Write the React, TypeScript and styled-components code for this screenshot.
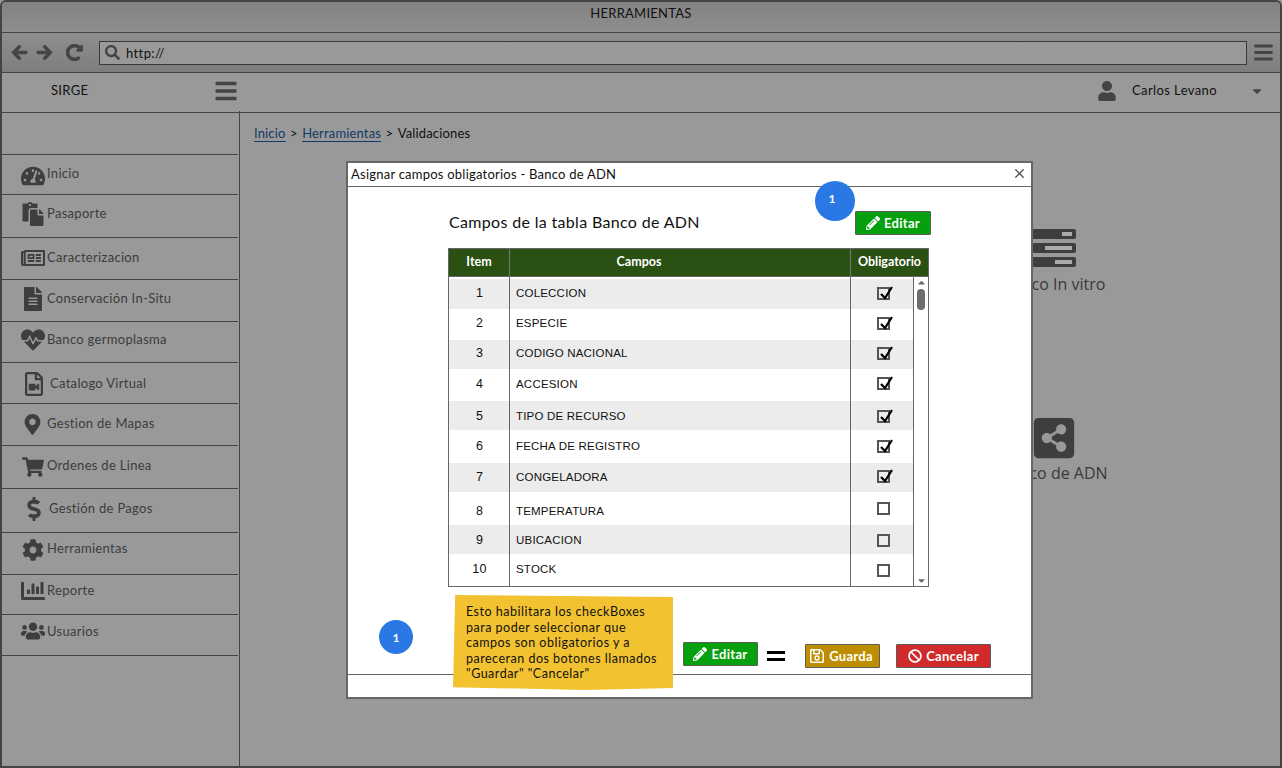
import React from 'react';
import styled, { createGlobalStyle } from 'styled-components';
import {
  FaArrowLeft, FaArrowRight, FaRedoAlt, FaSearch, FaBars, FaUser, FaCaretDown, FaCaretUp,
  FaTachometerAlt, FaPaste, FaRegNewspaper, FaFileAlt, FaHeartbeat, FaRegFileVideo,
  FaMapMarkerAlt, FaShoppingCart, FaDollarSign, FaCog, FaChartBar, FaUsers,
  FaPencilAlt, FaRegSave, FaBan, FaShareAltSquare,
} from 'react-icons/fa';
import { X } from 'lucide-react';

const GlobalStyle = createGlobalStyle`
  html, body { margin: 0; padding: 0; background: #999; }
  * { box-sizing: border-box; }
  body { font-family: Lato, "Open Sans", sans-serif; }
`;

const Frame = styled.div`
  position: relative;
  width: 1282px;
  height: 768px;
  border: 2px solid #444;
  border-radius: 6px 6px 0 0;
  background: #999;
  display: flex;
  flex-direction: column;
  overflow: hidden;
`;

const TitleBar = styled.div`
  height: 31px;
  flex: none;
  border-bottom: 1px solid #444;
  background: linear-gradient(#828282, #8e8e8e);
  color: #111;
  font-size: 13px;
  letter-spacing: 0.25px;
  display: flex;
  justify-content: center;
  padding-top: 3px;
`;

const Toolbar = styled.div`
  height: 40px;
  flex: none;
  border-bottom: 1px solid #444;
  background: linear-gradient(#8e8e8e, #7e7e7e);
  display: flex;
  align-items: center;
  padding: 0 6px 0 9px;
  color: #444;
`;

const NavArrow = styled.span<{ $gap: number }>`
  display: flex;
  font-size: 17px;
  margin-right: ${p => p.$gap}px;
  svg { stroke: currentColor; stroke-width: 30; }
`;

const UrlBox = styled.div`
  flex: 1;
  height: 24px;
  border: 1px solid #3a3a3a;
  background: #999;
  display: flex;
  align-items: center;
  padding-left: 5px;
  gap: 6px;
  color: #111;
  font-size: 13px;
  letter-spacing: 0.4px;
  margin-right: 6px;
  svg { color: #444; font-size: 15px; }
`;

const Burger = styled.span<{ $size: number }>`
  display: flex;
  color: #444;
  font-size: ${p => p.$size}px;
`;

const NavBar = styled.div`
  height: 40px;
  flex: none;
  border-bottom: 1px solid #444;
  display: flex;
  align-items: center;
  padding: 0 16px 4px 49px;
  color: #111;
  font-size: 13px;
  letter-spacing: 0.3px;
`;

const Brand = styled.span`
  width: 163px;
  margin-bottom: 2px;
`;

const UserBlock = styled.div`
  margin-left: auto;
  display: flex;
  align-items: center;
  color: #111;
  letter-spacing: 0.4px;
  svg { color: #444; }
`;

const UserName = styled.span`
  width: 118px;
  margin-left: 15px;
  margin-bottom: 2px;
`;

const Body = styled.div`
  flex: 1;
  display: flex;
  min-height: 0;
`;

const Sidebar = styled.nav`
  width: 236px;
  flex: none;
  color: #3c3c3c;
  font-size: 13px;
  letter-spacing: 0.3px;
`;

const SideTop = styled.div`
  height: 42px;
  border-bottom: 1px solid #444;
`;

const SideRow = styled.div<{ $h: number }>`
  height: ${p => p.$h}px;
  border-bottom: 1px solid #444;
  display: flex;
  align-items: flex-start;
`;

const IconSlot = styled.span<{ $w: number; $top: number }>`
  width: ${p => p.$w}px;
  margin-left: 16px;
  margin-top: ${p => p.$top}px;
  display: flex;
  justify-content: center;
  color: #3e3e3e;
`;

const SideLabel = styled.span<{ $top: number }>`
  margin-top: ${p => p.$top}px;
  line-height: 16px;
`;

const Main = styled.main`
  flex: 1;
  margin-left: 1px;
  border-left: 1px solid #444;
  margin-top: -2px;
  padding: 14px 0 0 14px;
  display: flex;
  flex-direction: column;
`;

const Crumbs = styled.div`
  font-size: 13px;
  letter-spacing: 0.15px;
  color: #111;
  display: flex;
  gap: 4.5px;
  line-height: 16px;
`;

const CrumbLink = styled.a`
  color: #123a66;
  text-decoration: none;
  border-bottom: 1px solid #123a66;
`;

const Tiles = styled.div`
  align-self: flex-end;
  margin-right: 171px;
  margin-top: 87px;
  display: flex;
  flex-direction: column;
  align-items: center;
  color: #3a3a3a;
  font-family: "Open Sans", sans-serif;
  font-size: 16px;
`;

const Tile = styled.div<{ $gap: number; $textGap: number }>`
  width: 110px;
  display: flex;
  flex-direction: column;
  align-items: center;
  margin-bottom: ${p => p.$gap}px;
  white-space: nowrap;
  svg { color: #3e3e3e; margin-bottom: ${p => p.$textGap}px; }
`;

const Modal = styled.section`
  position: absolute;
  left: 344px;
  top: 159px;
  width: 687px;
  height: 538px;
  background: #fff;
  border: 2px solid #666;
  display: flex;
  flex-direction: column;
  color: #111;
`;

const ModalHead = styled.header`
  height: 24px;
  flex: none;
  border-bottom: 1px solid #666;
  display: flex;
  justify-content: space-between;
  align-items: center;
  padding: 0 4px 2px 3px;
  font-size: 13px;
  letter-spacing: 0.23px;
  svg { color: #555; }
`;

const ModalBody = styled.div`
  flex: 1;
  min-height: 0;
  padding: 23px 0 0 100px;
  display: flex;
  flex-direction: column;
`;

const HeadingRow = styled.div`
  width: 483px;
  height: 38px;
  display: flex;
  justify-content: space-between;
  align-items: flex-start;
`;

const Heading = styled.h2`
  margin: 2px 0 0 1px;
  font-size: 16px;
  font-weight: 400;
  letter-spacing: 0.33px;
  color: #111;
`;

const ActionButton = styled.button<{ $bg: string; $w: number }>`
  width: ${p => p.$w}px;
  height: 24px;
  background: ${p => p.$bg};
  border: 1px solid #5c5c5c;
  border-radius: 1px;
  color: #fff;
  display: flex;
  align-items: center;
  justify-content: center;
  gap: 4px;
  padding: 0;
  font-family: inherit;
  font-size: 13px;
  font-weight: 700;
  letter-spacing: 0.3px;
  svg { font-size: 14px; }
`;

const SaveIcon = styled(FaRegSave)`
  && { font-size: 16px; }
  margin-left: -3px;
`;

const Table = styled.div`
  width: 481px;
  height: 339px;
  border: 1px solid #666;
  display: flex;
  flex-direction: column;
`;

const TableHead = styled.div`
  height: 28px;
  flex: none;
  display: grid;
  grid-template-columns: 61px 341px 1fr;
  background: #2a5013;
  color: #fff;
  font-size: 12.5px;
  font-weight: 700;
  border-bottom: 1px solid #666;
`;

const HeadCell = styled.div<{ $shiftLeft?: number }>`
  display: flex;
  align-items: center;
  justify-content: center;
  border-right: 1px solid #777;
  padding: 0 ${p => p.$shiftLeft ?? 0}px 2px 0;
  &:last-child { border-right: 0; }
`;

const TableScroll = styled.div`
  flex: 1;
  display: grid;
  grid-template-columns: 1fr 15px;
  min-height: 0;
`;

const Rows = styled.div`
  padding-top: 2px;
  position: relative;
  overflow: hidden;
  &::before, &::after {
    content: '';
    position: absolute;
    top: 0;
    bottom: 0;
    width: 1px;
    background: #666;
  }
  &::before { left: 60px; }
  &::after { left: 401px; }
`;

const Row = styled.div<{ $h: number; $shade: boolean }>`
  height: ${p => p.$h}px;
  display: grid;
  grid-template-columns: 61px 341px 1fr;
  background: ${p => (p.$shade ? '#ececec' : '#fff')};
  font-family: "Liberation Sans", Arial, sans-serif;
  font-size: 11.5px;
  color: #111;
`;

const Cell = styled.div<{ $center?: boolean; $shift: number }>`
  display: flex;
  align-items: center;
  justify-content: ${p => (p.$center ? 'center' : 'flex-start')};
  padding-left: ${p => (p.$center ? 0 : 6)}px;
  padding-top: ${p => Math.max(p.$shift, 0)}px;
  padding-bottom: ${p => Math.max(-p.$shift, 0)}px;
  letter-spacing: 0.2px;
`;

const ItemCell = styled(Cell)`
  font-size: 12.5px;
`;

const CheckCell = styled(Cell)`
  padding-left: 3px;
`;

const Scrollbar = styled.div`
  border-left: 1px solid #666;
  display: flex;
  flex-direction: column;
  align-items: center;
  color: #666;
  font-size: 11px;
  position: relative;
  justify-content: space-between;
`;

const Thumb = styled.div`
  position: absolute;
  top: 12px;
  left: 3px;
  width: 8px;
  height: 21px;
  border-radius: 4px;
  background: #6c6c6c;
`;

const CheckBox = styled.span`
  position: relative;
  width: 13px;
  height: 13px;
  border: 2px solid #555;
  display: block;
  svg { position: absolute; left: -1px; top: -5px; }
`;

const FootRow = styled.div`
  margin-left: 235px;
  margin-top: 55px;
  display: flex;
  align-items: flex-start;
`;

const EqualsSign = styled.span`
  width: 47px;
  margin-top: 9px;
  padding-left: 9px;
  display: flex;
  flex-direction: column;
  gap: 4px;
  i { display: block; width: 18px; height: 3px; background: #000; }
`;

const Spaced = styled.span<{ $gap: number; $top: number }>`
  margin-left: ${p => p.$gap}px;
  margin-top: ${p => p.$top}px;
`;

const ModalFoot = styled.footer`
  height: 23px;
  flex: none;
  border-top: 1px solid #666;
`;

const Badge = styled.span<{ $x: number; $y: number; $d: number; $off: number }>`
  position: absolute;
  left: ${p => p.$x}px;
  top: ${p => p.$y}px;
  width: ${p => p.$d}px;
  height: ${p => p.$d}px;
  border-radius: 50%;
  background: #2a78e4;
  color: #fff;
  font-size: 12px;
  font-weight: 700;
  display: flex;
  align-items: center;
  justify-content: center;
  padding: 0 ${p => p.$off}px ${p => p.$off}px 0;
`;

const Note = styled.aside`
  position: absolute;
  left: 451px;
  top: 593px;
  width: 220px;
  height: 95px;
  padding: 9px 0 0 13px;
  background: #f2c230;
  clip-path: polygon(1% 0, 100% 2%, 100% 98%, 60% 100%, 0 97%);
  color: #111;
  font-size: 12.5px;
  line-height: 15.6px;
  letter-spacing: 0.5px;
  white-space: nowrap;
`;

const sideItems = [
  { label: 'Inicio', h: 40, icon: <FaTachometerAlt size={24} />, iconTop: 9, labelTop: 10, w: 29 },
  { label: 'Pasaporte', h: 43, icon: <FaPaste size={24} />, iconTop: 7, labelTop: 10, w: 29 },
  { label: 'Caracterizacion', h: 42, icon: <FaRegNewspaper size={24} />, iconTop: 8, labelTop: 11, w: 29 },
  { label: 'Conservación In-Situ', h: 42, icon: <FaFileAlt size={24} />, iconTop: 7, labelTop: 10, w: 29 },
  { label: 'Banco germoplasma', h: 41, icon: <FaHeartbeat size={24} />, iconTop: 6, labelTop: 9, w: 29 },
  { label: 'Catalogo Virtual', h: 41, icon: <FaRegFileVideo size={24} />, iconTop: 9, labelTop: 12, w: 32 },
  { label: 'Gestion de Mapas', h: 42, icon: <FaMapMarkerAlt size={21} />, iconTop: 10, labelTop: 11, w: 29 },
  { label: 'Ordenes de Linea', h: 43, icon: <FaShoppingCart size={22} />, iconTop: 10, labelTop: 11, w: 29 },
  { label: 'Gestión de Pagos', h: 44, icon: <FaDollarSign size={24} />, iconTop: 8, labelTop: 11, w: 31 },
  { label: 'Herramientas', h: 42, icon: <FaCog size={22} />, iconTop: 6, labelTop: 7, w: 29 },
  { label: 'Reporte', h: 40, icon: <FaChartBar size={24} />, iconTop: 4, labelTop: 7, w: 29 },
  { label: 'Usuarios', h: 41, icon: <FaUsers size={24} />, iconTop: 4, labelTop: 8, w: 29 },
];

const fields = [
  { name: 'COLECCION', h: 30, on: true, shift: -3, boxShift: -2 },
  { name: 'ESPECIE', h: 31, on: true, shift: -4, boxShift: -2 },
  { name: 'CODIGO NACIONAL', h: 29, on: true, shift: -3, boxShift: -3 },
  { name: 'ACCESION', h: 32, on: true, shift: -2, boxShift: -3 },
  { name: 'TIPO DE RECURSO', h: 29, on: true, shift: 0, boxShift: 2 },
  { name: 'FECHA DE REGISTRO', h: 33, on: true, shift: -2, boxShift: 0 },
  { name: 'CONGELADORA', h: 29, on: true, shift: -2, boxShift: -2 },
  { name: 'TEMPERATURA', h: 33, on: false, shift: 5, boxShift: 0 },
  { name: 'UBICACION', h: 29, on: false, shift: 1, boxShift: 2 },
  { name: 'STOCK', h: 32, on: false, shift: -2, boxShift: 0 },
];

function Tick() {
  return (
    <svg width="17" height="17" viewBox="0 0 17 17">
      <path d="M3 10 L7 14 L14 3" fill="none" stroke="#000" strokeWidth="2.2" />
    </svg>
  );
}

function ServerIcon() {
  return (
    <svg width="44" height="38" viewBox="0 0 44 38">
      <rect x="0" y="0" width="44" height="10" rx="2" fill="#3e3e3e" />
      <rect x="0" y="14" width="44" height="10" rx="2" fill="#3e3e3e" />
      <rect x="0" y="28" width="44" height="10" rx="2" fill="#3e3e3e" />
      <rect x="30" y="3" width="10" height="4" fill="#aaa" />
      <rect x="13" y="17" width="27" height="4" fill="#aaa" />
      <rect x="23" y="31" width="17" height="4" fill="#aaa" />
    </svg>
  );
}

export default function App() {
  return (
    <>
      <GlobalStyle />
      <Frame>
        <TitleBar>HERRAMIENTAS</TitleBar>
        <Toolbar>
          <NavArrow $gap={8}><FaArrowLeft /></NavArrow>
          <NavArrow $gap={13}><FaArrowRight /></NavArrow>
          <NavArrow $gap={16}><FaRedoAlt /></NavArrow>
          <UrlBox><FaSearch />http://</UrlBox>
          <Burger $size={21}><FaBars /></Burger>
        </Toolbar>
        <NavBar>
          <Brand>SIRGE</Brand>
          <Burger $size={24}><FaBars /></Burger>
          <UserBlock>
            <FaUser size={20} />
            <UserName>Carlos Levano</UserName>
            <FaCaretDown size={14} />
          </UserBlock>
        </NavBar>
        <Body>
          <Sidebar>
            <SideTop />
            {sideItems.map(item => (
              <SideRow key={item.label} $h={item.h}>
                <IconSlot $w={item.w} $top={item.iconTop}>{item.icon}</IconSlot>
                <SideLabel $top={item.labelTop}>{item.label}</SideLabel>
              </SideRow>
            ))}
          </Sidebar>
          <Main>
            <Crumbs>
              <CrumbLink>Inicio</CrumbLink>
              <span>&gt;</span>
              <CrumbLink>Herramientas</CrumbLink>
              <span>&gt;</span>
              <span>Validaciones</span>
            </Crumbs>
            <Tiles>
              <Tile $gap={120} $textGap={6}>
                <ServerIcon />
                <span>Banco In vitro</span>
              </Tile>
              <Tile $gap={0} $textGap={1}>
                <FaShareAltSquare size={46} />
                <span>Banco de ADN</span>
              </Tile>
            </Tiles>
          </Main>
        </Body>

        <Modal>
          <ModalHead>
            <span>Asignar campos obligatorios - Banco de ADN</span>
            <X size={15} strokeWidth={2.2} />
          </ModalHead>
          <ModalBody>
            <HeadingRow>
              <Heading>Campos de la tabla Banco de ADN</Heading>
              <Spaced $gap={0} $top={1}>
                <ActionButton $bg="#06a00f" $w={76}><FaPencilAlt />Editar</ActionButton>
              </Spaced>
            </HeadingRow>
            <Table>
              <TableHead>
                <HeadCell>Item</HeadCell>
                <HeadCell $shiftLeft={82}>Campos</HeadCell>
                <HeadCell>Obligatorio</HeadCell>
              </TableHead>
              <TableScroll>
                <Rows>
                  {fields.map((field, i) => (
                    <Row key={field.name} $h={field.h} $shade={i % 2 === 0}>
                      <ItemCell $center $shift={field.shift}>{i + 1}</ItemCell>
                      <Cell $shift={field.shift}>{field.name}</Cell>
                      <CheckCell $center $shift={field.boxShift}>
                        <CheckBox>{field.on && <Tick />}</CheckBox>
                      </CheckCell>
                    </Row>
                  ))}
                </Rows>
                <Scrollbar>
                  <FaCaretUp />
                  <Thumb />
                  <FaCaretDown />
                </Scrollbar>
              </TableScroll>
            </Table>
            <FootRow>
              <ActionButton $bg="#06a00f" $w={75}><FaPencilAlt />Editar</ActionButton>
              <EqualsSign><i /><i /></EqualsSign>
              <Spaced $gap={0} $top={2}>
                <ActionButton $bg="#bd8f00" $w={75}><SaveIcon />Guarda</ActionButton>
              </Spaced>
              <Spaced $gap={16} $top={2}>
                <ActionButton $bg="#d02a2a" $w={95}><FaBan />Cancelar</ActionButton>
              </Spaced>
            </FootRow>
          </ModalBody>
          <ModalFoot />
        </Modal>

        <Badge $x={813} $y={179} $d={40} $off={6}>1</Badge>
        <Badge $x={377} $y={618} $d={34} $off={0}>1</Badge>
        <Note>
          Esto habilitara los checkBoxes<br />
          para poder seleccionar que<br />
          campos son obligatorios y a<br />
          pareceran dos botones llamados<br />
          "Guardar" "Cancelar"
        </Note>
      </Frame>
    </>
  );
}
